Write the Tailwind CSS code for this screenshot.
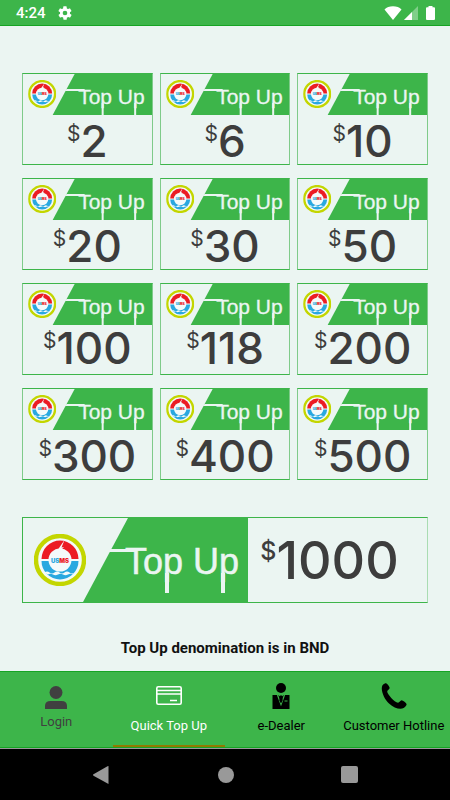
<!DOCTYPE html>
<html lang="en">

<head>
    <meta charset="utf-8" />
    <meta name="viewport" content="width=device-width, initial-scale=1" />
    <script src="https://cdn.jsdelivr.net/npm/@tailwindcss/browser@4"></script>
    <title>Quick Top Up</title>
</head>

<body class="bg-[#ebf5f2] font-['Roboto',sans-serif]">
    <!-- Logo, shared by all cards -->
    <svg class="hidden">
        <symbol id="logo" viewBox="0 0 52 52">
            <circle cx="26" cy="26" r="24" fill="#f4fafa" stroke="#c3d600" stroke-width="4.4" />
            <path d="M7.500 25a18.500 18.500 0 0 1 37 0z" fill="#ec1c24" />
            <path d="M7.500 27a18.500 18.500 0 0 0 37 0z" fill="#29a8e0" />
            <path d="M10.500 38.500q2.500-2 5 0t5 0 5 0 5 0 5 0 5 0l-2 2q-2-1.500-4.500 0t-5 0-5 0-5 0-5 0z" fill="#f4fafa" />
            <circle cx="26" cy="26" r="11.500" fill="#f4fafa" />
            <path d="M30.500 6l-6.500 9.500 2.800-.4L23 20l7-7-2.500.4z" fill="#f4fafa" />
        </symbol>
    </svg>

    <div class="min-h-screen flex flex-col">
        <!-- Status bar -->
        <header class="h-[26px] bg-[#3db54a] border-b border-[#16a424] flex items-center justify-between pl-4 pr-[15px] text-white">
            <div class="flex items-center gap-[11px]">
                <span class="text-[15px] leading-5 font-medium">4:24</span>
                <svg class="size-4" viewBox="0 0 24 24" fill="currentColor">
                    <path
                        d="M19.4 13c0-.3.1-.6.1-1s0-.7-.1-1l2.100-1.600c.2-.2.200-.4.100-.7l-2-3.400c-.1-.2-.4-.3-.6-.2l-2.500 1a7.300 7.300 0 0 0-1.700-1l-.4-2.600A.5.500 0 0 0 14 2h-4a.5.500 0 0 0-.5.400l-.4 2.700c-.6.200-1.100.6-1.700 1l-2.500-1c-.2-.1-.5 0-.6.200l-2 3.400c-.1.200-.1.500.1.700L4.600 11a8 8 0 0 0 0 2l-2.100 1.600c-.2.200-.2.400-.1.700l2 3.400c.1.200.4.300.6.200l2.500-1c.5.400 1.100.7 1.700 1l.4 2.600c0 .3.200.5.400.5h4c.3 0 .5-.2.500-.4l.4-2.700c.6-.2 1.100-.6 1.700-1l2.500 1c.2.100.5 0 .6-.2l2-3.400c.1-.2.100-.5-.1-.7zM12 15.500a3.500 3.500 0 1 1 0-7 3.500 3.500 0 0 1 0 7z" />
                </svg>
            </div>
            <div class="flex items-center">
                <svg class="w-[18px] h-[14px]" viewBox="0 0 18 14" fill="currentColor">
                    <path d="M9 14L.5 3.500C2.500 1.500 5.500.3 9 .3s6.500 1.200 8.500 3.200z" />
                </svg>
                <svg class="w-[14px] h-[14px] ml-[2px]" viewBox="0 0 14 14" fill="currentColor">
                    <path d="M0 14L14 0v14z" opacity=".35" />
                    <path d="M0 14l8-8v8z" />
                </svg>
                <svg class="w-[9px] h-[14px] ml-2" viewBox="0 0 9 14" fill="currentColor">
                    <path d="M2.500 0h4v1.200H8q1 0 1 1V13q0 1-1 1H1q-1 0-1-1V2.200q0-1 1-1h1.500z" />
                </svg>
            </div>
        </header>

        <main class="flex-1 px-[22px] pt-[47px]">
            <div id="cards" class="grid grid-cols-3 gap-x-[7px] gap-y-[13px]"></div>

            <button class="mt-[37px] w-full h-[86px] flex border border-[#3db54a] border-r-[#a9dcb2] text-[#3d3d3d] cursor-pointer">
                <svg class="w-[225px] h-[84px] shrink-0" viewBox="0 0 225 84">
                    <path d="M105 0h120v84H60z" fill="#3db54a" />
                    <use href="#logo" x="11" y="16" width="52" height="52" />
                    <g fill="#ebf5f2">
                        <path d="M86 31h28v3H84zM142 55h4v20h-4zM198 55h4v20h-4z" />
                        <text x="102" y="56" font-family="Liberation Sans, sans-serif" font-size="36" stroke="#ebf5f2" stroke-width=".5">Top Up</text>
                    </g>
                    <text x="37" y="44.500" text-anchor="middle" font-family="Inter, sans-serif" font-size="6" font-weight="900"><tspan fill="#29a8e0">US</tspan><tspan fill="#ec1c24">MS</tspan></text>
                </svg>
                <span class="flex-1 h-full flex justify-center items-start pt-[15px] pr-4 font-['Inter',sans-serif] font-medium">
                    <span class="text-[25px] leading-9">$</span>
                    <span class="text-[52px] leading-14">1000</span>
                </span>
            </button>

            <p class="mt-[33px] mb-[11px] text-center text-[15px] leading-6 font-bold text-[#111111]">Top Up denomination is in BND</p>
        </main>

        <!-- Tabs -->
        <nav class="h-[77px] bg-[#3db54a] border-t border-b border-t-[#16a424] border-b-[#16a424] grid grid-cols-4 text-[13px] leading-5 text-black whitespace-nowrap">
            <a href="#login" class="flex flex-col items-center pt-[14px] text-[#404040]">
                <svg class="w-6 h-6" viewBox="0 0 24 24" fill="currentColor">
                    <circle cx="12" cy="6.500" r="6.500" />
                    <path d="M1 23v-3q0-5 5.500-5h11q5.500 0 5.500 5v3z" />
                </svg>
                <span class="mt-[2px]">Login</span>
            </a>
            <a href="#topup" class="flex flex-col items-center pt-[14px] text-white border-b-2 border-[#8f7a00]">
                <svg class="w-[26px] h-5" viewBox="0 0 26 20" fill="none" stroke="currentColor" stroke-width="1.600">
                    <rect x=".8" y=".8" width="24.400" height="17.400" rx="1.500" />
                    <path d="M1 4.500h24M1 8h24M14 14.500h7" />
                </svg>
                <span class="mt-[10px]">Quick Top Up</span>
            </a>
            <a href="#dealer" class="flex flex-col items-center pt-[11px]">
                <svg class="w-[18px] h-[26px]" viewBox="0 0 18 26" fill="currentColor">
                    <circle cx="9" cy="5" r="5" />
                    <path d="M.5 12H6l3 2 3-2h5.500v14H.5z" />
                    <path d="M5.500 12L9 21.500 12.500 12M12.500 18h3" fill="none" stroke="#3db54a" stroke-width="1.200" />
                    <path d="M8 12.500h2l.6 5L9 20.500l-1.600-3z" />
                </svg>
                <span class="mt-[7px]">e-Dealer</span>
            </a>
            <a href="#hotline" class="flex flex-col items-center pt-[11px]">
                <svg class="w-[26px] h-[26px]" viewBox="0 0 26 26" fill="currentColor">
                    <path
                        d="M1.500 2.200C3 .8 4.300.2 5 .3c1.300.3 3.600 3.600 3.700 4.700.1 1.200-2.400 2.200-2.500 3.500C6.200 11.200 13.500 19.300 17 19.700c1.400.1 2.300-2.500 3.600-2.500 1.300.1 4.900 2.700 5 4 .1 1-1.500 2.900-3 3.800-3.200 1.800-9.600.3-14.600-4.500S-.9 6.400 1.500 2.200z" />
                </svg>
                <span class="mt-[7px]">Customer Hotline</span>
            </a>
        </nav>

        <!-- System navigation -->
        <footer class="h-[52px] bg-black border-t border-[#9a9a9a] text-[#999999] flex items-center justify-center gap-[107px]">
            <button aria-label="Back" class="cursor-pointer">
                <svg class="size-[18px]" viewBox="0 0 18 18" fill="currentColor">
                    <path d="M15.500 0v18L.5 9.700q-1-.7 0-1.400L14.500.2z" />
                </svg>
            </button>
            <button aria-label="Home" class="size-4 rounded-full bg-[#999999] cursor-pointer"></button>
            <button aria-label="Recent apps" class="size-[17px] rounded-xs bg-[#999999] cursor-pointer"></button>
        </footer>
    </div>

    <script>
        const rows = [
            { amounts: [2, 6, 10], spacing: 'mt-[1px]' },
            { amounts: [20, 30, 50], spacing: 'mt-[1px]' },
            { amounts: [100, 118, 200], spacing: '-mt-[2px]' },
            { amounts: [300, 400, 500], spacing: 'mt-[1px]' },
        ];

        document.getElementById('cards').innerHTML = rows.flatMap(row => row.amounts.map(amount => `
            <button class="h-[92px] flex flex-col border border-x-[#7fcb8a] border-y-[#3db54a] text-[#3d3d3d] cursor-pointer">
                <svg class="w-full h-[41px] shrink-0" viewBox="0 0 129 41" preserveAspectRatio="xMaxYMid slice">
                    <path d="M52 0h78v41H30z" fill="#3db54a" />
                    <use href="#logo" x="5.500" y="6" width="28" height="28" />
                    <g fill="#ebf5f2">
                        <path d="M44 15h18v2H42zM79 29h2v12h-2zM111.500 29h2v12h-2z" />
                        <text x="55.500" y="30" font-family="Liberation Sans, sans-serif" font-size="21" stroke="#ebf5f2" stroke-width=".3">Top Up</text>
                    </g>
                    <text x="19.500" y="21" text-anchor="middle" font-family="Inter, sans-serif" font-size="3" font-weight="900"><tspan fill="#29a8e0">US</tspan><tspan fill="#ec1c24">MS</tspan></text>
                </svg>
                <span class="w-full flex justify-center items-start font-['Inter',sans-serif] ${row.spacing}">
                    <span class="text-[21px] leading-9">$</span>
                    <span class="text-[44px] leading-[50px] font-medium">${amount}</span>
                </span>
            </button>`)).join('');
    </script>
</body>

</html>
